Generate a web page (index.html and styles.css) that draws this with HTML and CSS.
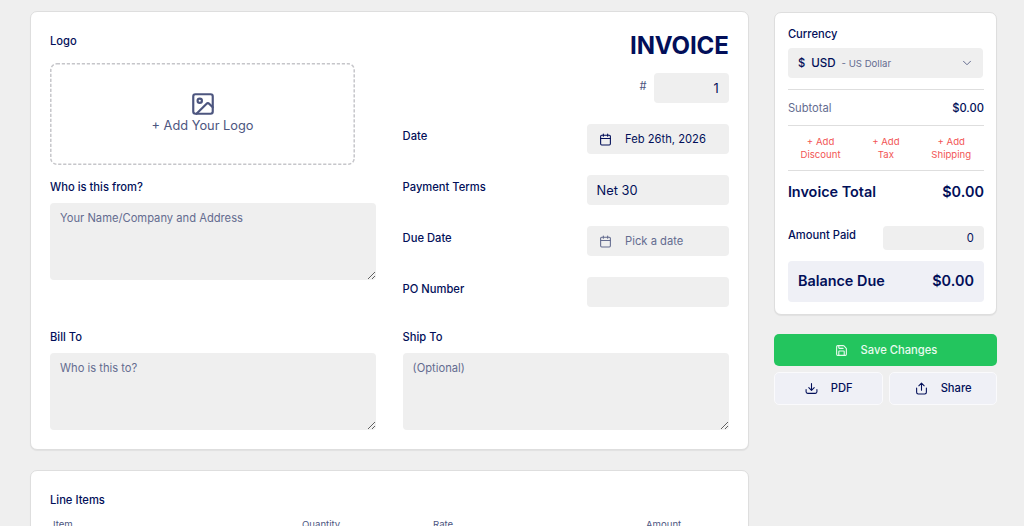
FILE: index.html
```html
<!DOCTYPE html>
<html lang="en">
<head>
	<meta charset="UTF-8">
	<title>Invoice</title>
	<link rel="stylesheet" href="styles.css">
</head>
<body>
	<div class="page">
		<main class="main">
			<section class="card invoice">
				<div class="top">
					<div class="col">
						<label class="label">Logo</label>
						<div class="dropzone">
							<svg class="dashes" viewBox="0 0 305 102"><rect x="0.8" y="0.8" width="303.400" height="100.400" rx="6"/></svg>
							<svg class="icon icon-image" viewBox="0 0 24 24"><rect x="3" y="3" width="18" height="18" rx="2"/><circle cx="9" cy="9" r="2"/><path d="m21 15-3.086-3.086a2 2 0 0 0-2.828 0L6 21"/></svg>
							<span>+ Add Your Logo</span>
						</div>
						<label class="label from-label">Who is this from?</label>
						<textarea class="area" placeholder="Your Name/Company and Address"></textarea>
					</div>
					<div class="col">
						<h1 class="title">INVOICE</h1>
						<div class="number">
							<span class="hash">#</span>
							<input class="field number-field" type="text" value="1">
						</div>
						<div class="row">
							<label class="label">Date</label>
							<button class="field date">
								<svg class="icon" viewBox="0 0 24 24"><path d="M8 2v4M16 2v4M3 10h18"/><rect x="3" y="4" width="18" height="18" rx="2"/></svg>
								<span>Feb 26th, 2026</span>
							</button>
						</div>
						<div class="row">
							<label class="label">Payment Terms</label>
							<input class="field" type="text" value="Net 30">
						</div>
						<div class="row">
							<label class="label">Due Date</label>
							<button class="field date empty">
								<svg class="icon" viewBox="0 0 24 24"><path d="M8 2v4M16 2v4M3 10h18"/><rect x="3" y="4" width="18" height="18" rx="2"/></svg>
								<span>Pick a date</span>
							</button>
						</div>
						<div class="row">
							<label class="label">PO Number</label>
							<input class="field" type="text">
						</div>
					</div>
				</div>
				<div class="parties">
					<div class="col">
						<label class="label">Bill To</label>
						<textarea class="area" placeholder="Who is this to?"></textarea>
					</div>
					<div class="col">
						<label class="label">Ship To</label>
						<textarea class="area" placeholder="(Optional)"></textarea>
					</div>
				</div>
			</section>
			<section class="card items">
				<h2 class="label">Line Items</h2>
				<div class="items-head">
					<span>Item</span>
					<span>Quantity</span>
					<span>Rate</span>
					<span>Amount</span>
				</div>
			</section>
		</main>

		<aside class="side">
			<section class="card summary">
				<label class="label">Currency</label>
				<div class="currency">
					<span class="symbol">$</span>
					<span class="code">USD</span>
					<span class="name">- US Dollar</span>
					<svg class="icon chevron" viewBox="0 0 24 24"><path d="m5 8.500 7 7 7-7"/></svg>
				</div>
				<div class="subtotal">
					<span>Subtotal</span>
					<span class="money">$0.00</span>
				</div>
				<div class="extras">
					<a>+ Add<br>Discount</a>
					<a>+ Add<br>Tax</a>
					<a>+ Add<br>Shipping</a>
				</div>
				<div class="total">
					<span>Invoice Total</span>
					<span>$0.00</span>
				</div>
				<div class="paid">
					<label class="label">Amount Paid</label>
					<input class="field paid-field" type="text" value="0">
				</div>
				<div class="balance">
					<span>Balance Due</span>
					<span>$0.00</span>
				</div>
			</section>
			<button class="btn save">
				<svg class="icon" viewBox="0 0 24 24"><path d="M15.2 3a2 2 0 0 1 1.4.6l3.8 3.8a2 2 0 0 1 .6 1.4V19a2 2 0 0 1-2 2H5a2 2 0 0 1-2-2V5a2 2 0 0 1 2-2z"/><path d="M17 21v-7a1 1 0 0 0-1-1H8a1 1 0 0 0-1 1v7"/><path d="M7 3v4a1 1 0 0 0 1 1h7"/></svg>
				<span>Save Changes</span>
			</button>
			<div class="actions">
				<button class="btn">
					<svg class="icon" viewBox="0 0 24 24"><path d="M12 3v12M7 10.500l5 5 5-5M2 14v4a3 3 0 0 0 3 3h14a3 3 0 0 0 3-3v-4"/></svg>
					<span>PDF</span>
				</button>
				<button class="btn">
					<svg class="icon" viewBox="0 0 24 24"><path d="M12 15V2M7 7l5-5 5 5M3 11v8a3 3 0 0 0 3 3h12a3 3 0 0 0 3-3v-8"/></svg>
					<span>Share</span>
				</button>
			</div>
		</aside>
	</div>
</body>
</html>
```
FILE: styles.css
```css
*{
	box-sizing: border-box;
	margin: 0;
	padding: 0;
}
body{
	height: 526px;
	overflow: hidden;
	background: #efefef;
	color: #020f59;
	font-family: Inter, "Liberation Sans", sans-serif;
	font-size: 11.2px;
}
button,input,textarea{
	border: 0;
	color: inherit;
	font-family: inherit;
}
.page{
	display: flex;
	align-items: flex-start;
	gap: 25.4px;
	padding: 11px 26px 0 30px;
}
.main{
	flex: none;
	width: 719px;
}
.side{
	flex: none;
	width: 223px;
	padding-top: 1px;
}
.card{
	background: #fff;
	border: 1px solid #dedede;
	border-radius: 7px;
	box-shadow: 0 1px 1px rgba(0,0,0,.06);
}
.icon{
	flex: none;
	width: 13px;
	height: 13px;
	fill: none;
	stroke: currentColor;
	stroke-width: 2;
	stroke-linecap: round;
	stroke-linejoin: round;
}
.label{
	display: block;
	font-size: 11.2px;
	font-weight: 500;
	line-height: 16px;
}
.invoice{
	height: 439px;
	padding: 21px 19px 0;
}
.top{
	display: grid;
	grid-template-columns: 326px 326px;
	column-gap: 26.600px;
	height: 296px;
}
.parties{
	display: grid;
	grid-template-columns: 326px 326px;
	column-gap: 26.600px;
}
.dropzone{
	display: flex;
	position: relative;
	flex-direction: column;
	align-items: center;
	justify-content: center;
	width: 305px;
	height: 102px;
	margin-top: 14px;
	padding-bottom: 2px;
	color: #4d567f;
	font-size: 12.8px;
	line-height: 18px;
}
.dashes{
	position: absolute;
	top: 0;
	left: 0;
	width: 100%;
	height: 100%;
	fill: none;
	stroke: #c6c6ca;
	stroke-width: 1.5;
	stroke-dasharray: 3.2 1.8;
}
.icon-image{
	width: 26px;
	height: 26px;
}
.from-label{
	margin-top: 14px;
}
.area{
	display: block;
	width: 326px;
	height: 77px;
	margin-top: 8px;
	padding: 7px 10px;
	background: #efefef;
	border-radius: 4px;
	font-size: 11.2px;
	line-height: 17px;
	resize: vertical;
}
.area::placeholder{
	color: #646c8f;
}
.title{
	font-size: 24px;
	font-weight: 700;
	line-height: 26px;
	letter-spacing: -.15px;
	text-align: right;
}
.number{
	display: flex;
	justify-content: flex-end;
	gap: 7px;
	margin: 14px 0 21px;
}
.hash{
	line-height: 26px;
	color: #4d567f;
}
.field{
	width: 142px;
	height: 30px;
	padding: 0 10px;
	background: #efefef;
	border-radius: 4px;
	font-size: 12.8px;
}
.number-field{
	width: 75px;
	text-align: right;
}
.row{
	display: flex;
	justify-content: space-between;
	height: 51px;
}
.row .label{
	margin-top: 4px;
}
.date{
	display: flex;
	align-items: center;
	gap: 13px;
	padding: 0 12.500px;
	font-size: 11.2px;
}
.empty{
	color: #646c8f;
}
.items{
	height: 90px;
	margin-top: 20px;
	padding: 21px 19px 0;
}
.items-head{
	display: grid;
	grid-template-columns: 249px 131px 213px 1fr;
	padding: 10px 3px 0;
	color: #4d567f;
	font-size: 9.6px;
	line-height: 13px;
}
.summary{
	height: 303px;
	padding: 13px 12.500px;
}
.currency{
	display: flex;
	align-items: center;
	width: 195px;
	height: 30px;
	margin: 6px 0 11px;
	padding: 0 10px;
	background: #efefef;
	border-radius: 4px;
}
.symbol,.code{
	font-weight: 500;
}
.code{
	margin: 0 6px 0 6px;
	font-size: 11.6px;
}
.name{
	color: #646c8f;
	font-size: 9.6px;
}
.chevron{
	width: 12px;
	height: 12px;
	margin-left: auto;
	color: #646c8f;
}
.subtotal{
	display: flex;
	align-items: center;
	justify-content: space-between;
	height: 36px;
	border-top: 1px solid #dedede;
	color: #646c8f;
}
.money{
	color: #020f59;
	font-weight: 500;
}
.extras{
	display: grid;
	grid-template-columns: repeat(3, 1fr);
	height: 46px;
	padding-top: 10px;
	border-top: 1px solid #dedede;
	border-bottom: 1px solid #dedede;
	color: #f25555;
	font-size: 9.6px;
	line-height: 12.8px;
	text-align: center;
}
.total{
	display: flex;
	justify-content: space-between;
	margin-top: 11px;
	font-size: 14.4px;
	font-weight: 600;
	line-height: 20px;
}
.paid{
	display: flex;
	justify-content: space-between;
	margin-top: 24px;
}
.paid .label{
	line-height: 18px;
}
.paid-field{
	width: 101px;
	height: 24px;
	font-size: 11.2px;
	text-align: right;
}
.balance{
	display: flex;
	align-items: center;
	justify-content: space-between;
	height: 41px;
	margin-top: 11px;
	padding: 0 10px 2px;
	background: #eff0f6;
	border-radius: 4px;
	font-size: 14.4px;
	font-weight: 600;
}
.btn{
	display: flex;
	flex: 1;
	align-items: center;
	justify-content: center;
	gap: 13px;
	height: 33px;
	padding-bottom: 1px;
	background: #eff0f6;
	border: 1px solid #fafafc;
	border-radius: 5px;
	font-size: 11.2px;
	font-weight: 500;
}
.save{
	width: 100%;
	height: 32px;
	margin-top: 19px;
	padding-bottom: 0;
	background: #23c55e;
	border: 0;
	color: #e9fbef;
}
.actions{
	display: flex;
	gap: 6px;
	margin-top: 6px;
}
```
